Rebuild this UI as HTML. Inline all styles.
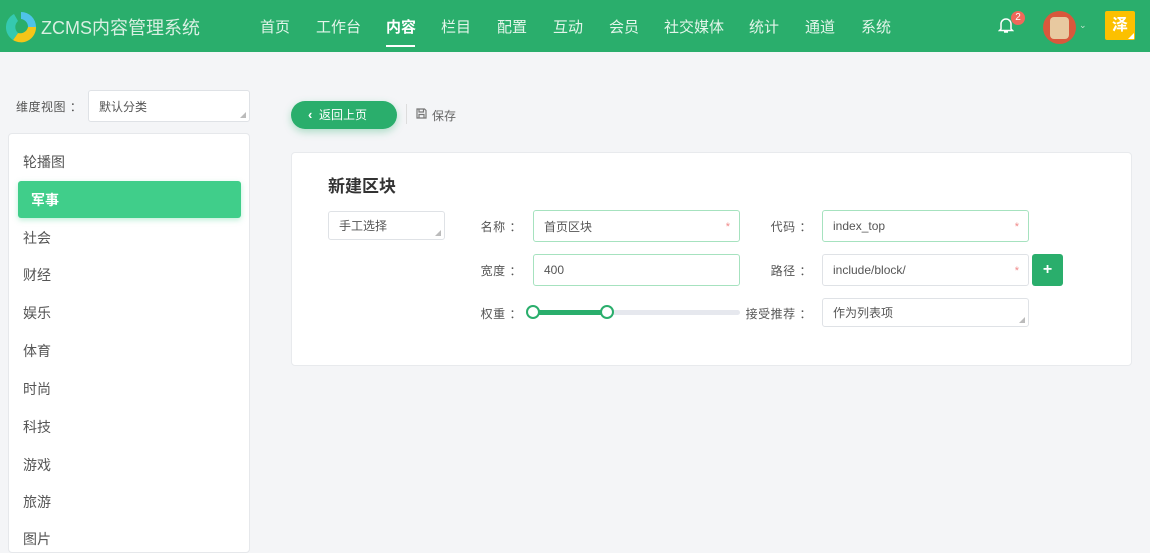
<!DOCTYPE html>
<html><head><meta charset="utf-8"><style>
*{box-sizing:border-box;margin:0;padding:0}
body{width:1150px;height:544px;overflow:hidden;background:#f4f5f7;font-family:"Liberation Sans","Noto Sans CJK SC",sans-serif;position:relative;color:#555}
.abs{position:absolute}
.hdr{left:0;top:0;width:1150px;height:52px;background:#2aae6c}
.nav{top:16px;font-size:15px;color:#e3f5ea}
.inp{background:#fff;border:1px solid #dfe2e6;border-radius:3px;font-size:12px;color:#555;padding-left:10px;display:flex;align-items:center}
.g{border-color:#a6e2bf}
.star{position:absolute;right:9px;top:50%;color:#f08a8a;font-size:11px;margin-top:-5px}
.tri{position:absolute;right:3px;bottom:3px;width:0;height:0;border-left:6px solid transparent;border-bottom:6px solid #bbb}
.lbl{font-size:12px;color:#555;text-align:right;letter-spacing:0.5px}
.side{left:23px;font-size:14px;color:#555}
</style></head><body>
<div class="abs hdr"></div>
<svg class="abs" style="left:4px;top:10px" width="34" height="34" viewBox="0 0 34 34">
<path d="M17 2 A15 15 0 0 1 32 17 L24 17 A8 8 0 0 0 17 9Z" fill="#4fc3e8"/>
<path d="M32 17 A15 15 0 0 1 9 30 L14 23 A8 8 0 0 0 24 17Z" fill="#f5c518"/>
<path d="M9 30 A15 15 0 0 1 10 4 L14 11 A8 8 0 0 0 14 23Z" fill="#35c9b0"/>
</svg>
<div class="abs" style="left:41px;top:14px;font-size:18px;color:#d8efe2">ZCMS内容管理系统</div>
<div class="abs nav" style="left:260px">首页</div>
<div class="abs nav" style="left:316px">工作台</div>
<div class="abs nav" style="left:386px;color:#fff;font-weight:bold">内容</div>
<div class="abs" style="left:386px;top:45px;width:29px;height:2px;background:#fff"></div>
<div class="abs nav" style="left:441px">栏目</div>
<div class="abs nav" style="left:497px">配置</div>
<div class="abs nav" style="left:553px">互动</div>
<div class="abs nav" style="left:609px">会员</div>
<div class="abs nav" style="left:664px">社交媒体</div>
<div class="abs nav" style="left:749px">统计</div>
<div class="abs nav" style="left:805px">通道</div>
<div class="abs nav" style="left:861px">系统</div>
<svg class="abs" style="left:998px;top:16px" width="16" height="18" viewBox="0 0 16 18"><path d="M3 13 V8 a5 5 0 0 1 10 0 V13 L14.5 14.5 H1.5Z M6 16 h4" fill="none" stroke="#fff" stroke-width="1.5"/></svg>
<div class="abs" style="left:1011px;top:11px;width:14px;height:14px;border-radius:7px;background:#f0685a;color:#fff;font-size:10px;text-align:center;line-height:14px">2</div>
<div class="abs" style="left:1043px;top:11px;width:33px;height:33px;border-radius:50%;background:#d9583c;overflow:hidden"><div style="margin:6px 0 0 7px;width:19px;height:22px;background:#e8c9a0;border-radius:4px"></div></div>
<div class="abs" style="left:1079px;top:20px;font-size:9px;color:#bfe6cf">⌄</div>
<div class="abs" style="left:1105px;top:11px;width:30px;height:29px;background:#fcc000;border-radius:2px;color:#fff;font-size:16px;font-weight:bold;text-align:center;line-height:29px">泽</div>
<div class="abs" style="left:1128px;top:33px;width:0;height:0;border-left:6px solid transparent;border-bottom:6px solid #fff"></div>

<div class="abs lbl" style="left:16px;top:98px;text-align:left">维度视图 ：</div>
<div class="abs inp" style="left:88px;top:90px;width:162px;height:32px">默认分类<span class="tri"></span></div>
<div class="abs" style="left:8px;top:133px;width:242px;height:420px;background:#fff;border:1px solid #e6e8eb;border-radius:4px"></div>
<div class="abs side" style="top:152px">轮播图</div>
<div class="abs" style="left:18px;top:181px;width:223px;height:37px;background:#40ce8a;border-radius:3px;box-shadow:0 2px 6px rgba(64,206,138,.35)"></div>
<div class="abs side" style="left:31px;top:190px;color:#fff;font-weight:bold">军事</div>
<div class="abs side" style="top:228px">社会</div>
<div class="abs side" style="top:265px">财经</div>
<div class="abs side" style="top:303px">娱乐</div>
<div class="abs side" style="top:341px">体育</div>
<div class="abs side" style="top:379px">时尚</div>
<div class="abs side" style="top:417px">科技</div>
<div class="abs side" style="top:455px">游戏</div>
<div class="abs side" style="top:492px">旅游</div>
<div class="abs side" style="top:529px">图片</div>

<div class="abs" style="left:291px;top:101px;width:106px;height:28px;border-radius:14px;background:#2aae6c;box-shadow:0 3px 8px rgba(42,174,108,.35);color:#fff;font-size:12px;line-height:28px;padding-left:17px"><b style="font-size:13px">‹</b>&nbsp; 返回上页</div>
<div class="abs" style="left:406px;top:104px;width:1px;height:20px;background:#ddd"></div>
<svg class="abs" style="left:416px;top:108px" width="11" height="11" viewBox="0 0 11 11"><path d="M1 1H8.5L10 2.5V10H1Z M3 1V4H7.5V1 M3 10V6.5H8V10" fill="none" stroke="#777" stroke-width="1.2"/></svg>
<div class="abs" style="left:432px;top:107px;font-size:12px;color:#666">保存</div>

<div class="abs" style="left:291px;top:152px;width:841px;height:214px;background:#fff;border:1px solid #e8eaed;border-radius:4px"></div>
<div class="abs" style="left:328px;top:172px;font-size:17px;font-weight:bold;color:#333">新建区块</div>
<div class="abs inp" style="left:328px;top:211px;width:117px;height:29px">手工选择<span class="tri"></span></div>
<div class="abs lbl" style="left:460px;top:218px;width:62px">名称 ：</div>
<div class="abs inp g" style="left:533px;top:210px;width:207px;height:32px">首页区块<span class="star">*</span></div>
<div class="abs lbl" style="left:750px;top:218px;width:62px">代码 ：</div>
<div class="abs inp g" style="left:822px;top:210px;width:207px;height:32px">index_top<span class="star">*</span></div>
<div class="abs lbl" style="left:460px;top:262px;width:62px">宽度 ：</div>
<div class="abs inp g" style="left:533px;top:254px;width:207px;height:32px">400</div>
<div class="abs lbl" style="left:750px;top:262px;width:62px">路径 ：</div>
<div class="abs inp" style="left:822px;top:254px;width:207px;height:32px">include/block/<span class="star">*</span></div>
<div class="abs" style="left:1032px;top:254px;width:31px;height:32px;background:#2aae6c;border-radius:3px;color:#fff;font-weight:bold;font-size:16px;text-align:center;line-height:31px">+</div>
<div class="abs lbl" style="left:460px;top:305px;width:62px">权重 ：</div>
<div class="abs" style="left:533px;top:310px;width:207px;height:5px;background:#e6e8ee;border-radius:3px"></div>
<div class="abs" style="left:533px;top:310px;width:74px;height:5px;background:#2aae6c;border-radius:3px"></div>
<div class="abs" style="left:526px;top:305px;width:14px;height:14px;border-radius:50%;background:#fff;border:2px solid #2aae6c"></div>
<div class="abs" style="left:600px;top:305px;width:14px;height:14px;border-radius:50%;background:#fff;border:2px solid #2aae6c"></div>
<div class="abs lbl" style="left:730px;top:305px;width:82px">接受推荐 ：</div>
<div class="abs inp" style="left:822px;top:298px;width:207px;height:29px">作为列表项<span class="tri"></span></div>
</body></html>
